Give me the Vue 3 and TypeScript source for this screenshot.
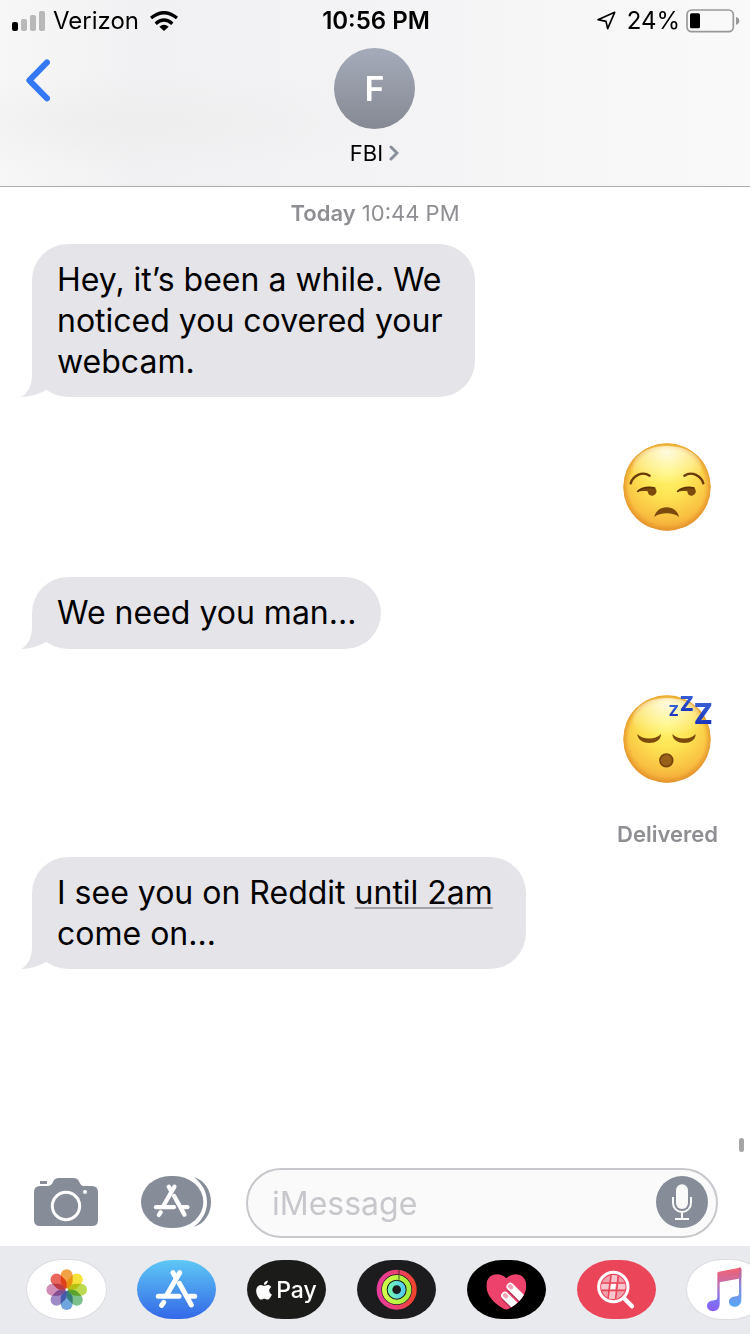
<script setup lang="ts">
import { ref } from 'vue'

interface Part {
  text: string
  link?: boolean
}

interface Message {
  id: number
  from: 'them' | 'me'
  lines?: Part[][]
  emoji?: 'unamused' | 'sleeping'
  status?: string
}

interface Petal {
  angle: number
  color: string
}

const contact = { name: 'FBI', initial: 'F' }

const messages: Message[] = [
  {
    id: 1,
    from: 'them',
    lines: [
      [{ text: 'Hey, it’s been a while. We' }],
      [{ text: 'noticed you covered your' }],
      [{ text: 'webcam.' }],
    ],
  },
  { id: 2, from: 'me', emoji: 'unamused' },
  { id: 3, from: 'them', lines: [[{ text: 'We need you man...' }]] },
  { id: 4, from: 'me', emoji: 'sleeping', status: 'Delivered' },
  {
    id: 5,
    from: 'them',
    lines: [
      [{ text: 'I see you on Reddit ' }, { text: 'until 2am', link: true }],
      [{ text: 'come on...' }],
    ],
  },
]

const petals: Petal[] = [
  { angle: 0, color: '#f2a244' },
  { angle: 45, color: '#f5e23c' },
  { angle: 90, color: '#bdd950' },
  { angle: 135, color: '#7cc08c' },
  { angle: 180, color: '#70a6dd' },
  { angle: 225, color: '#9f8bc6' },
  { angle: 270, color: '#cf8db8' },
  { angle: 315, color: '#ea665c' },
]

const draft = ref('')
</script>

<template>
  <div class="phone">
    <svg class="defs" aria-hidden="true">
      <defs>
        <symbol id="store-glyph" viewBox="460 415 138 125">
          <g fill="none" stroke="#fff" stroke-width="15" stroke-linecap="round">
            <path d="M538 429 L499 497" />
            <path d="M518 429 L527 444" />
            <path d="M474 500 H536" />
            <path d="M568 500 H583" />
            <path d="M537 461 L573 526" />
            <path d="M490 518 L484 527" />
          </g>
        </symbol>
        <radialGradient id="face" cx="0.5" cy="0.32" r="0.72">
          <stop offset="0" stop-color="#fff66c" />
          <stop offset="0.4" stop-color="#fde454" />
          <stop offset="0.75" stop-color="#f9c142" />
          <stop offset="1" stop-color="#ee9c30" />
        </radialGradient>
        <radialGradient id="rim" cx="0.5" cy="0.5" r="0.5">
          <stop offset="0.86" stop-color="#e8952a" stop-opacity="0" />
          <stop offset="1" stop-color="#dd8826" stop-opacity="0.7" />
        </radialGradient>
        <radialGradient id="shine" cx="0.5" cy="0.15" r="0.75">
          <stop offset="0" stop-color="#fff" stop-opacity="0.8" />
          <stop offset="0.4" stop-color="#fff" stop-opacity="0.45" />
          <stop offset="1" stop-color="#fff" stop-opacity="0" />
        </radialGradient>
        <linearGradient id="snore" x1="0" y1="0" x2="0" y2="1">
          <stop offset="0" stop-color="#3f6be0" />
          <stop offset="1" stop-color="#1226b0" />
        </linearGradient>
      </defs>
    </svg>

    <header class="top">
      <div class="status">
        <div class="status-left">
          <svg class="signal" viewBox="0 0 33 20" aria-hidden="true">
            <rect x="0" y="11" width="6" height="9" rx="2" fill="#000" />
            <rect x="9" y="8" width="6" height="12" rx="2" fill="#b8b8b9" />
            <rect x="18" y="4" width="6" height="16" rx="2" fill="#b8b8b9" />
            <rect x="27" y="0" width="6" height="20" rx="2" fill="#b8b8b9" />
          </svg>
          <span>Verizon</span>
          <svg class="wifi" viewBox="447 30 84 60" aria-hidden="true">
            <g fill="none" stroke="#000" stroke-width="10">
              <path d="M450 51 Q489 19 528 51" />
              <path d="M464 68 Q489 46 514 68" />
            </g>
            <path d="M489 90 L475 77 Q489 66 503 77 Z" />
          </svg>
        </div>
        <time class="clock">10:56 PM</time>
        <div class="status-right">
          <svg class="arrow" viewBox="117 34 57 57" aria-hidden="true">
            <path d="M120 60 L170 38 L149 87 L144 65 Z" fill="none" stroke="#000" stroke-width="5" stroke-linejoin="round" />
          </svg>
          <span>24%</span>
          <svg class="battery" viewBox="378 26 162 72" aria-hidden="true">
            <rect x="381" y="29" width="139" height="65" rx="14" fill="none" stroke="#98989a" stroke-width="5" />
            <rect x="390" y="39" width="30" height="45" rx="5" />
            <path d="M528 50 Q538 53 538 61 Q538 70 528 73 Z" fill="#98989a" />
          </svg>
        </div>
      </div>

      <nav class="nav">
        <button class="back" type="button" aria-label="Back">
          <svg viewBox="78 176 72 129" aria-hidden="true">
            <path d="M141 186 L88 240 L141 294" fill="none" stroke="#3478f6" stroke-width="18" stroke-linecap="round" stroke-linejoin="round" />
          </svg>
        </button>
        <button class="contact" type="button">
          <span class="avatar">{{ contact.initial }}</span>
          <span class="name">
            {{ contact.name }}
            <svg viewBox="0 0 10 16" aria-hidden="true">
              <path d="M2 2 L8 8 L2 14" fill="none" stroke="#8a909b" stroke-width="3" stroke-linecap="round" />
            </svg>
          </span>
        </button>
      </nav>
    </header>

    <main class="thread">
      <p class="stamp"><strong>Today</strong> 10:44 PM</p>

      <template v-for="m in messages" :key="m.id">
        <div v-if="m.lines" class="bubble" :class="{ wrapped: m.lines.length > 1 }">
          <svg class="tail" viewBox="0 0 26 38" aria-hidden="true">
            <path d="M11 0 V16 C11 27 6 35 0 38 C9 38 18 35 25 31 V0 Z" />
          </svg>
          <div v-for="(line, i) in m.lines" :key="i" class="line">
            <template v-for="(part, j) in line" :key="j">
              <a v-if="part.link" href="#">{{ part.text }}</a>
              <template v-else>{{ part.text }}</template>
            </template>
          </div>
        </div>

        <div v-else class="sent">
          <svg v-if="m.emoji === 'unamused'" class="emoji" viewBox="69 39 264 264" role="img" aria-label="Unamused face">
            <circle cx="201" cy="171" r="131" fill="url(#face)" />
            <circle cx="201" cy="171" r="131" fill="url(#rim)" />
            <ellipse cx="201" cy="112" rx="104" ry="64" fill="url(#shine)" />
            <g fill="none" stroke="#6b3a08" stroke-width="7" stroke-linecap="round">
              <path d="M92 160 C98 138 126 122 149 137" />
              <path d="M310 160 C304 138 276 122 253 137" />
            </g>
            <g fill="#7d4a0e">
              <path d="M111 185 C124 173 144 170 158 172 C174 174 173 195 158 197 C147 198 144 191 143 184 C132 182 122 183 111 185 Z" />
              <path d="M231 185 C244 173 262 170 276 172 C292 174 291 195 276 197 C265 198 263 191 262 184 C251 182 242 183 231 185 Z" />
              <path d="M163 261 C170 222 230 222 237 261 C220 246 180 246 163 261 Z" />
            </g>
            <g fill="none" stroke="#5e3306" stroke-width="5" stroke-linecap="round">
              <path d="M113 184 C126 173 144 170 164 174" />
              <path d="M233 184 C246 173 262 170 282 174" />
            </g>
          </svg>
          <svg v-else class="emoji" viewBox="69 47 264 264" role="img" aria-label="Sleeping face">
            <circle cx="201" cy="179" r="131" fill="url(#face)" />
            <circle cx="201" cy="179" r="131" fill="url(#rim)" />
            <ellipse cx="201" cy="120" rx="104" ry="64" fill="url(#shine)" />
            <g fill="#7d4a0e">
              <path d="M112 164 C128 182 166 182 183 164 C184 200 113 200 112 164 Z" />
              <path d="M217 164 C233 182 271 182 287 164 C288 200 218 200 217 164 Z" />
            </g>
            <circle cx="199" cy="243" r="19" fill="#99601a" stroke="#75440c" stroke-width="5" />
            <g class="snore" fill="url(#snore)">
              <text x="206" y="110" font-size="44">Z</text>
              <text x="239" y="96" font-size="62">Z</text>
              <text x="281" y="133" font-size="84">Z</text>
            </g>
          </svg>
          <p v-if="m.status" class="receipt">{{ m.status }}</p>
        </div>
      </template>

      <span class="scrollbar" aria-hidden="true"></span>
    </main>

    <form class="composer" @submit.prevent>
      <button class="tool camera" type="button" aria-label="Camera">
        <svg viewBox="102 144 192 144" aria-hidden="true">
          <path d="M120 153 H141 V162 H120 Z M120 168 H142 C152 168 156 163 159 156 C163 147 167 144 177 144 H220 C230 144 234 147 238 156 C241 163 244 168 254 168 H276 Q294 168 294 186 V270 Q294 288 276 288 H120 Q102 288 102 270 V186 Q102 168 120 168 Z" fill="#868d99" />
          <circle cx="198" cy="228" r="41" fill="none" stroke="#fff" stroke-width="9" />
          <circle cx="255" cy="186" r="6" fill="#fff" />
        </svg>
      </button>
      <button class="tool apps" type="button" aria-label="Apps">
        <svg viewBox="423 138 210 156" aria-hidden="true">
          <rect x="423" y="138" width="187" height="156" rx="88" ry="78" fill="#868d99" />
          <path d="M582 141 C615 152 633 182 633 216 C633 250 615 280 582 291 C605 272 621 248 621 216 C621 184 605 160 582 141 Z" fill="#868d99" />
          <use href="#store-glyph" x="456" y="158" width="119" height="108" />
        </svg>
      </button>
      <div class="field">
        <input v-model="draft" type="text" placeholder="iMessage" aria-label="iMessage" />
        <button class="tool mic" type="button" aria-label="Dictate">
          <svg viewBox="618 138 156 156" aria-hidden="true">
            <circle cx="696" cy="216" r="78" fill="#868d99" />
            <rect x="678" y="163" width="36" height="74" rx="18" fill="#fafafa" />
            <path d="M669 201 V219 A27 27 0 0 0 723 219 V201 M696 247 V266 M675 267 H717" fill="none" stroke="#fafafa" stroke-width="6" />
          </svg>
        </button>
      </div>
    </form>

    <footer class="strip">
      <button class="app white" type="button" aria-label="Photos">
        <svg viewBox="-119 -89 237 177" aria-hidden="true">
          <g class="petals">
            <path
              v-for="p in petals"
              :key="p.angle"
              d="M0 0 L-13 -13 Q-18 -18 -18 -25 V-43 A18 18 0 0 1 18 -43 V-25 Q18 -18 13 -13 Z"
              :fill="p.color"
              :transform="`rotate(${p.angle})`"
            />
          </g>
          <circle r="4" fill="#fff" />
        </svg>
      </button>
      <button class="app store" type="button" aria-label="App Store">
        <svg viewBox="410 391 237 177" aria-hidden="true">
          <use href="#store-glyph" x="460" y="415" width="138" height="125" />
        </svg>
      </button>
      <button class="app pay" type="button" aria-label="Apple Pay">
        <svg class="apple" viewBox="2 0 20 24" aria-hidden="true">
          <path fill="#fff" d="M12.152 6.896c-.948 0-2.415-1.078-3.96-1.04-2.04.027-3.91 1.183-4.961 3.014-2.117 3.675-.546 9.103 1.519 12.09 1.013 1.454 2.208 3.09 3.792 3.039 1.52-.065 2.09-.987 3.935-.987 1.831 0 2.35.987 3.96.948 1.637-.026 2.676-1.48 3.676-2.948 1.156-1.688 1.636-3.325 1.662-3.415-.039-.013-3.182-1.221-3.22-4.857-.026-3.04 2.48-4.494 2.597-4.559-1.429-2.09-3.623-2.324-4.39-2.376-2-.156-3.675 1.09-4.61 1.09zM15.53 3.83c.843-1.012 1.4-2.427 1.245-3.83-1.207.052-2.662.805-3.532 1.818-.78.896-1.454 2.338-1.273 3.714 1.338.104 2.715-.688 3.559-1.701" />
        </svg>
        <span>Pay</span>
      </button>
      <button class="app activity" type="button" aria-label="Activity">
        <svg viewBox="-119 -89 237 177" aria-hidden="true">
          <defs>
            <linearGradient id="move" x1="0" x2="1"><stop offset="0" stop-color="#e83c9a" /><stop offset="0.5" stop-color="#ea3f72" /><stop offset="1" stop-color="#f0432f" /></linearGradient>
            <linearGradient id="exercise" x1="0" x2="1"><stop offset="0" stop-color="#d2fb4c" /><stop offset="1" stop-color="#a5ee3b" /></linearGradient>
            <linearGradient id="stand" x1="0" x2="1"><stop offset="0" stop-color="#6ff5b4" /><stop offset="1" stop-color="#56cdee" /></linearGradient>
          </defs>
          <g fill="none" stroke-width="14">
            <circle r="53" stroke="url(#move)" />
            <circle r="37" stroke="url(#exercise)" />
            <circle r="20" stroke="url(#stand)" />
          </g>
          <path d="M7 -60 V-46 M7 -43 V-30" stroke="#1c1c1e" stroke-opacity="0.45" stroke-width="5" />
        </svg>
      </button>
      <button class="app black" type="button" aria-label="Digital Touch">
        <svg viewBox="50 391 237 177" aria-hidden="true">
          <defs>
            <clipPath id="heart"><path d="M168 446 C148 424 108 431 108 468 C108 503 145 532 168 540 C191 532 228 503 228 468 C228 431 188 424 168 446 Z" /></clipPath>
          </defs>
          <g clip-path="url(#heart)">
            <rect x="100" y="425" width="140" height="120" fill="#ec426b" />
            <g fill="none" stroke-linecap="round">
              <path d="M165 502 L206 543 M182 476 L234 528" stroke="#a8244a" stroke-width="25" />
              <path d="M164 498 L205 539 M180 471 L232 523" stroke="#fff" stroke-width="23" />
              <path d="M164 497 L167 500 M179 470 L182 473" stroke="#f4a3b8" stroke-width="13" />
            </g>
          </g>
        </svg>
      </button>
      <button class="app search" type="button" aria-label="Image search">
        <svg viewBox="380 391 237 177" aria-hidden="true">
          <defs>
            <clipPath id="lens"><circle cx="489" cy="472" r="36" /></clipPath>
          </defs>
          <g clip-path="url(#lens)">
            <rect x="450" y="432" width="80" height="80" fill="#f3a0ae" />
            <path d="M481 462 H497 L494 480 H478 Z" fill="#fff" />
            <path d="M450 462 H478 V480 H450 Z M498 484 H472 V512 H498 Z M500 430 H482 V458 H500 Z M500 462 H530 V480 H500 Z" fill="#f8c6ce" />
            <path d="M483 430 L472 514 M505 430 L495 514 M450 460 H530 M450 482 H530" fill="none" stroke="#eb455a" stroke-width="5" />
          </g>
          <circle cx="489" cy="472" r="44" fill="none" stroke="#fff" stroke-width="9" />
          <path d="M521 506 L545 530" stroke="#fff" stroke-width="13" stroke-linecap="round" />
        </svg>
      </button>
      <button class="app white" type="button" aria-label="Music">
        <svg viewBox="710 391 237 177" aria-hidden="true">
          <defs>
            <linearGradient id="note" gradientUnits="userSpaceOnUse" x1="822" y1="415" x2="822" y2="545">
              <stop offset="0" stop-color="#f5606e" /><stop offset="0.35" stop-color="#c56fae" /><stop offset="0.75" stop-color="#7d74f2" /><stop offset="1" stop-color="#8b5cf6" />
            </linearGradient>
            <linearGradient id="note-right" gradientUnits="userSpaceOnUse" x1="860" y1="415" x2="860" y2="530">
              <stop offset="0" stop-color="#d95a85" /><stop offset="0.45" stop-color="#8a86d8" /><stop offset="1" stop-color="#58a8f8" />
            </linearGradient>
          </defs>
          <path d="M801 431 Q801 427 806 426 L868 414 Q873 413 873 419 V446 L808 458 V523 C808 551 771 550 770 529 C770 514 786 513 796 511 Q801 510 801 504 Z" fill="url(#note)" />
          <path d="M866 414 Q873 413 873 419 V510 C873 537 837 537 836 517 C836 502 851 501 861 499 Q866 498 866 492 Z" fill="url(#note-right)" />
        </svg>
      </button>
    </footer>
  </div>
</template>

<style>
html,
body {
  background: #fff;
}
</style>

<style scoped>
.phone {
  display: flex;
  flex-direction: column;
  min-height: 100vh;
  overflow: hidden;
  background: #fff;
  color: #000;
  font-family: Inter, "Liberation Sans", sans-serif;
}

.phone * {
  box-sizing: border-box;
}

.defs {
  position: absolute;
  width: 0;
  height: 0;
}

svg {
  display: block;
  flex: none;
}

button {
  padding: 0;
  border: 0;
  background: none;
  color: inherit;
  font: inherit;
  cursor: pointer;
}

p {
  margin: 0;
}

.top {
  border-bottom: 1px solid #acacae;
  background:
    radial-gradient(ellipse at 18% 66%, #eeeeef 0%, rgba(240, 240, 242, 0) 30%),
    linear-gradient(90deg, #f7f7f7 0%, #f1f1f3 18%, #f3f3f5 50%, #f7f7f8 75%, #f9f9f9 100%);
}

.status {
  display: grid;
  grid-template-columns: 1fr auto 1fr;
  align-items: center;
  height: 41px;
  padding: 0 10px 0 12px;
  font-size: 24px;
  line-height: 28px;
}

.status-left,
.status-right {
  display: flex;
  align-items: center;
}

.status-left {
  gap: 8px;
}

.status-right {
  justify-content: flex-end;
  gap: 6px;
}

.signal {
  width: 33px;
  height: 20px;
}

.wifi {
  width: 28px;
  height: 20px;
  margin-left: 3px;
}

.clock {
  font-weight: 600;
}

.arrow {
  width: 19px;
  height: 19px;
  margin-right: 5px;
}

.battery {
  width: 54px;
  height: 24px;
}

.nav {
  display: grid;
  grid-template-columns: 1fr auto 1fr;
  align-items: start;
  padding: 7px 27px 19px 26px;
}

.back {
  justify-self: start;
  margin-top: 11px;
}

.back svg {
  width: 24px;
  height: 43px;
}

.contact {
  display: flex;
  flex-direction: column;
  align-items: center;
  gap: 10px;
}

.avatar {
  display: flex;
  align-items: center;
  justify-content: center;
  width: 81px;
  height: 81px;
  border-radius: 50%;
  background: linear-gradient(#a5abb9, #858993);
  color: #fff;
  font-size: 34px;
  font-weight: 600;
}

.name {
  display: flex;
  align-items: center;
  gap: 6px;
  font-size: 22px;
  line-height: 28px;
}

.name svg {
  width: 10px;
  height: 16px;
}

.thread {
  position: relative;
  display: flex;
  flex: 1;
  flex-direction: column;
  align-items: flex-start;
  padding: 13px 32px 32px;
}

.stamp {
  align-self: center;
  margin-bottom: 18px;
  color: #8e8e93;
  font-size: 22px;
  line-height: 26px;
}

.stamp strong {
  font-weight: 600;
}

.bubble {
  position: relative;
  min-height: 72px;
  padding: 15px 25px;
  border-radius: 36px;
  background: #e5e4e9;
  font-size: 32px;
  line-height: 41px;
}

.bubble.wrapped {
  padding-right: 33px;
}

.tail {
  position: absolute;
  bottom: 0;
  left: -11px;
  width: 26px;
  height: 38px;
  fill: #e5e4e9;
}

.line {
  white-space: pre-wrap;
}

.line a {
  color: inherit;
  text-decoration: underline;
  text-decoration-color: #a3a3a7;
  text-decoration-thickness: 2px;
  text-decoration-skip-ink: none;
  text-underline-offset: 3px;
}

.sent {
  display: flex;
  flex-direction: column;
  align-self: flex-end;
  align-items: flex-end;
  padding: 46px 0;
}

.sent:has(.receipt) {
  padding-bottom: 10px;
}

.emoji {
  width: 88px;
  height: 88px;
  margin-right: 7px;
  overflow: visible;
}

.snore {
  font-family: Inter, "Liberation Sans", sans-serif;
  font-weight: 800;
}

.receipt {
  margin-top: 38px;
  color: #8e8e93;
  font-size: 22px;
  font-weight: 600;
  line-height: 26px;
}

.scrollbar {
  position: absolute;
  right: 6px;
  bottom: 16px;
  width: 5px;
  height: 14px;
  border-radius: 3px;
  background: #a5a5a5;
}

.composer {
  display: flex;
  align-items: center;
  padding: 0 32px 8px 34px;
}

.tool {
  margin-bottom: 2px;
}

.camera svg {
  width: 64px;
  height: 48px;
}

.apps {
  margin-right: 35px;
  margin-left: 43px;
}

.apps svg {
  width: 70px;
  height: 52px;
}

.field {
  display: flex;
  flex: 1;
  align-items: center;
  min-width: 0;
  height: 70px;
  padding: 0 8px 0 24px;
  border: 2px solid #c7c7cc;
  border-radius: 35px;
  background: #fafafa;
}

.field input {
  flex: 1;
  min-width: 0;
  padding: 0;
  border: 0;
  outline: 0;
  background: none;
  color: #000;
  font: inherit;
  font-size: 32px;
  line-height: 41px;
}

.field input::placeholder {
  color: #c7c7cc;
  opacity: 1;
}

.mic svg {
  width: 52px;
  height: 52px;
}

.strip {
  display: flex;
  gap: 31px;
  padding: 14px 0 15px 27px;
  overflow: hidden;
  background: #e9eaee;
}

.app {
  display: flex;
  flex: none;
  align-items: center;
  justify-content: center;
  width: 79px;
  height: 59px;
  overflow: hidden;
  border-radius: 36px / 30px;
}

.app > svg {
  width: 79px;
  height: 59px;
}

.white {
  background: #fff;
  box-shadow: 0 0 0 1px #dcdde0;
}

.petals {
  isolation: isolate;
}

.petals path {
  mix-blend-mode: multiply;
}

.store {
  background: linear-gradient(#5ec8f5, #3468e8);
}

.pay {
  gap: 4px;
  background: #1b1b19;
  color: #fff;
  font-size: 23px;
  font-weight: 500;
  line-height: 28px;
}

.app > .apple {
  width: 16px;
  height: 20px;
}

.activity {
  background: #1c1c1e;
}

.black {
  background: #000;
}

.search {
  background: #eb455a;
}
</style>
